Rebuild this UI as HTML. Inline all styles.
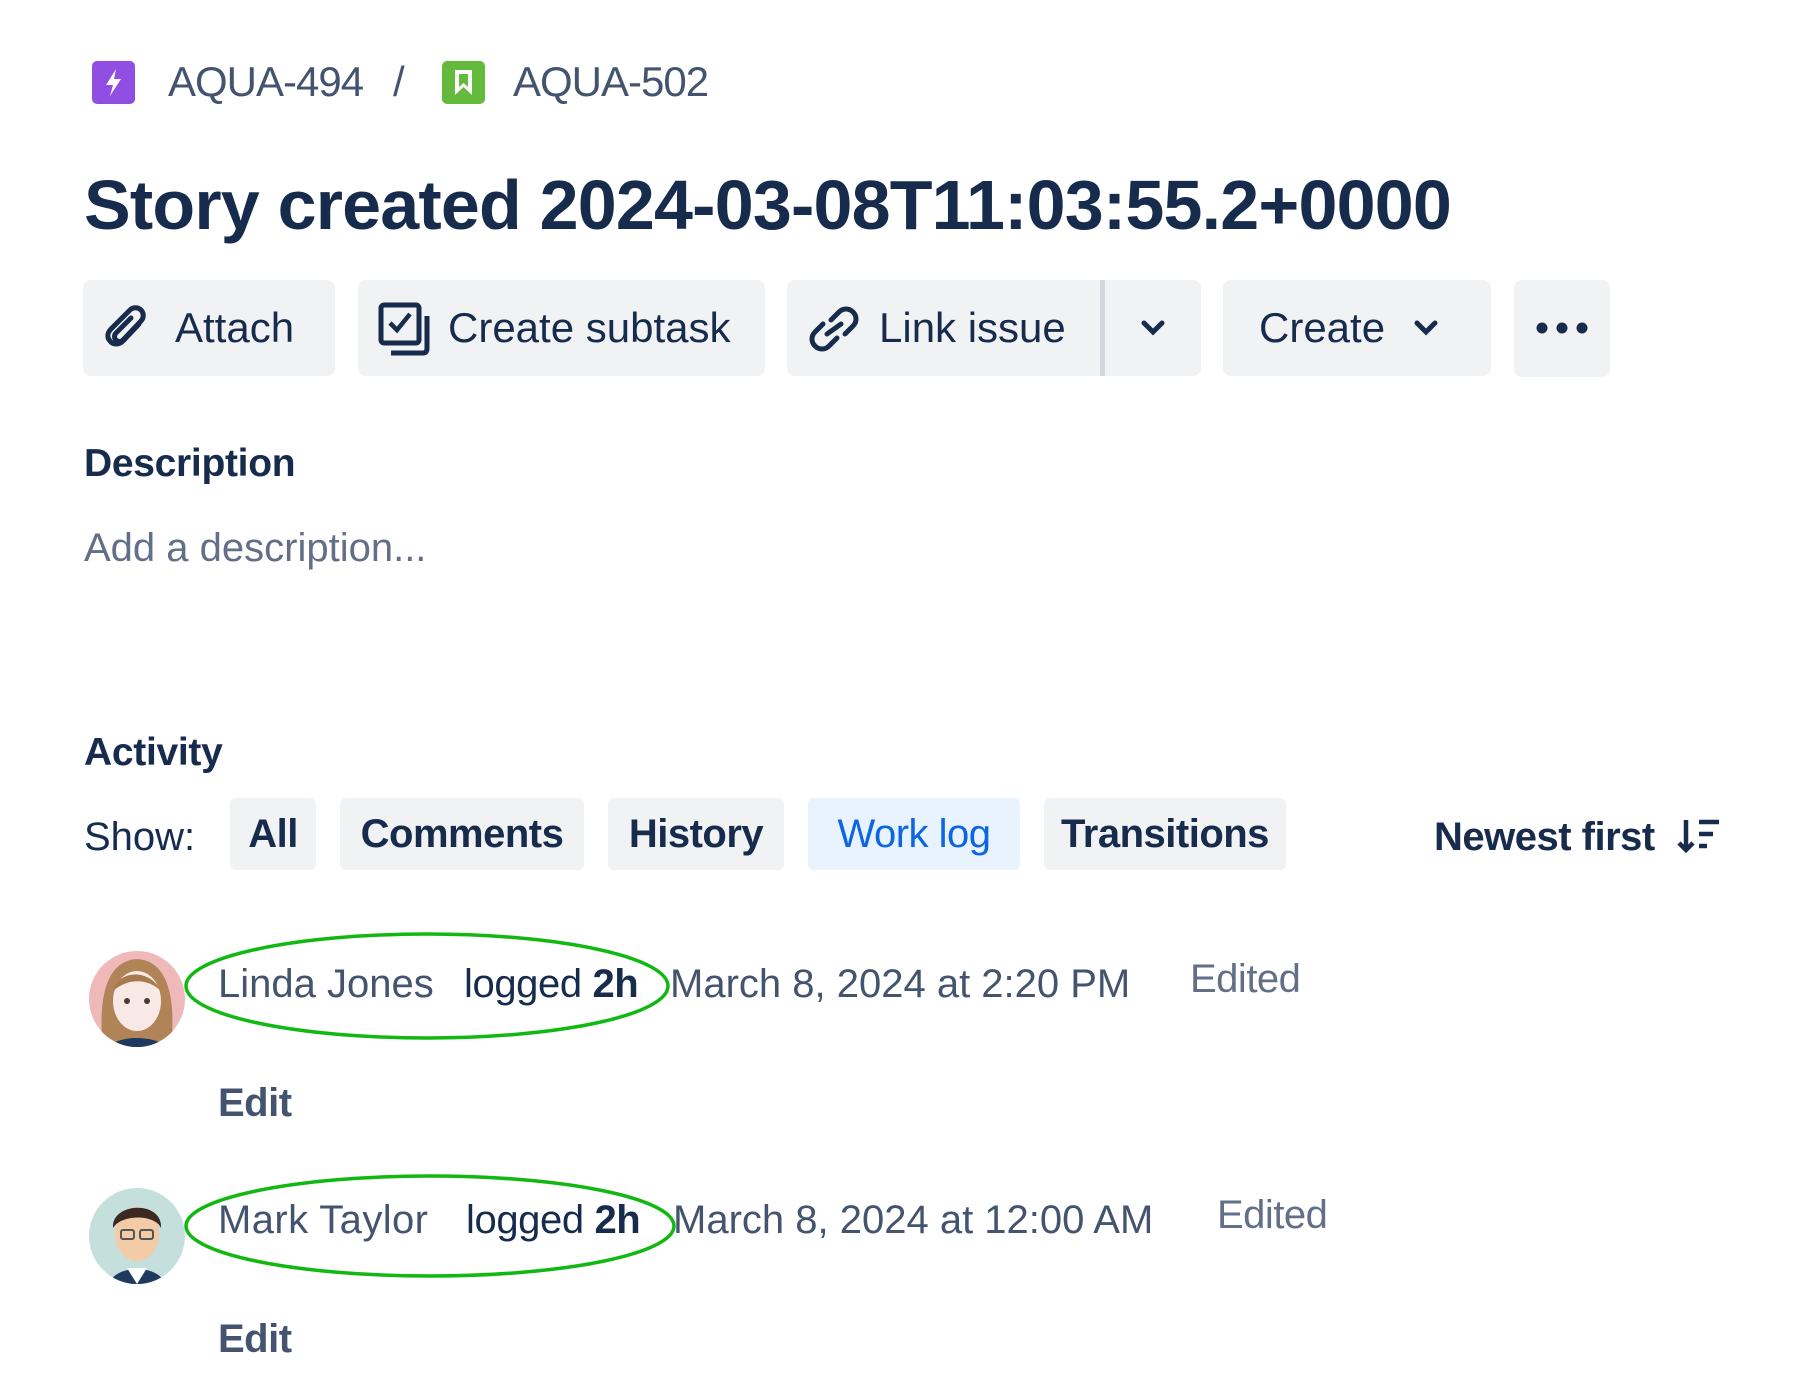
<!DOCTYPE html>
<html><head><meta charset="utf-8"><style>
*{margin:0;padding:0;box-sizing:border-box}
body{width:1800px;height:1380px;background:#fff;position:relative;overflow:hidden;font-family:"Liberation Sans",sans-serif;color:#172b4d}
.a{position:absolute;white-space:nowrap}
.btn{position:absolute;background:#f1f2f4;border-radius:8px;top:280px;height:96px}
.bt{position:absolute;top:0;line-height:96px;font-size:42px;color:#172b4d}
.pill{position:absolute;top:800px;height:72px;background:#f1f2f4;border-radius:6px;font-size:40px;font-weight:bold;line-height:72px;text-align:center;color:#172b4d;letter-spacing:-0.5px}
.t{font-size:40px;line-height:1;color:#44546f}
</style></head><body>

<svg class="a" style="left:92px;top:61px" width="43" height="43" viewBox="0 0 43 43"><rect width="43" height="43" rx="5" fill="#904ee2"/><path d="M24 8 L14 24 H21 L18 35 L29 18 H22 Z" fill="#fff"/></svg>
<div class="a" style="left:168px;top:58px;font-size:42px;color:#44546f;letter-spacing:-1px">AQUA-494</div>
<div class="a" style="left:393px;top:58px;font-size:42px;color:#44546f">/</div>
<svg class="a" style="left:442px;top:61px" width="43" height="43" viewBox="0 0 43 43"><rect width="43" height="43" rx="5" fill="#63ba3c"/><path d="M13 9 H30 V34 L21.5 26 L13 34 Z" fill="#fff"/><path d="M17 13 H26 V26 L21.5 22 L17 26 Z" fill="#63ba3c"/></svg>
<div class="a" style="left:513px;top:58px;font-size:42px;color:#44546f;letter-spacing:-1px">AQUA-502</div>

<div class="a" style="left:84px;top:165px;font-size:70px;font-weight:bold;color:#172b4d;letter-spacing:-0.8px">Story created 2024-03-08T11:03:55.2+0000</div>

<div class="btn" style="left:83px;width:252px">
<svg class="a" style="left:20px;top:24px" width="50" height="50" viewBox="0 0 50 50"><path d="M36 20 L20 37 C16 41 10 41 7 37 C4 34 4 29 8 25 L27 6 C30 3 35 3 38 6 C41 9 41 14 38 17 L20 36 C18 38 15 38 13 36 C11 34 11 31 13 29 L28 14" fill="none" stroke="#172b4d" stroke-width="5" stroke-linecap="round"/></svg>
<div class="bt" style="left:92px">Attach</div></div>
<div class="btn" style="left:358px;width:407px">
<svg class="a" style="left:20px;top:22px" width="54" height="54" viewBox="0 0 54 54"><rect x="3" y="3" width="38" height="38" rx="3" fill="none" stroke="#172b4d" stroke-width="5"/><path d="M12 21 L19 28 L32 12" fill="none" stroke="#172b4d" stroke-width="4.5"/><path d="M49 14 V46 C49 49 48 51 45 51 H13" fill="none" stroke="#172b4d" stroke-width="5"/></svg>
<div class="bt" style="left:90px">Create subtask</div></div>
<div class="btn" style="left:787px;width:414px">
<svg class="a" style="left:20px;top:24px" width="54" height="50" viewBox="0 0 54 50"><path d="M24 16 L32 8 C36 4 42 4 46 8 C50 12 50 18 46 22 L38 30 M30 34 L22 42 C18 46 12 46 8 42 C4 38 4 32 8 28 L16 20 M20 30 L34 20" fill="none" stroke="#172b4d" stroke-width="5" stroke-linecap="round"/></svg>
<div class="bt" style="left:92px">Link issue</div>
<div class="a" style="left:313px;top:0;width:5px;height:96px;background:#d4d7dc"></div>
<svg class="a" style="left:353px;top:38px" width="26" height="20" viewBox="0 0 26 20"><path d="M4 5 L13 14 L22 5" fill="none" stroke="#172b4d" stroke-width="5" stroke-linecap="round"/></svg></div>
<div class="btn" style="left:1223px;width:268px">
<div class="bt" style="left:36px">Create</div>
<svg class="a" style="left:190px;top:38px" width="26" height="20" viewBox="0 0 26 20"><path d="M4 5 L13 14 L22 5" fill="none" stroke="#172b4d" stroke-width="5" stroke-linecap="round"/></svg></div>
<div class="btn" style="left:1514px;width:96px;height:97px">
<svg class="a" style="left:20px;top:38px" width="56" height="20" viewBox="0 0 56 20"><circle cx="8" cy="10" r="5.5" fill="#172b4d"/><circle cx="28" cy="10" r="5.5" fill="#172b4d"/><circle cx="48" cy="10" r="5.5" fill="#172b4d"/></svg></div>

<div class="a" style="left:84px;top:442px;font-size:39px;font-weight:bold;letter-spacing:-0.3px">Description</div>
<div class="a" style="left:84px;top:526px;font-size:40px;color:#626f86;letter-spacing:0px">Add a description...</div>

<div class="a" style="left:84px;top:731px;font-size:39px;font-weight:bold;letter-spacing:-0.3px">Activity</div>
<div class="a" style="left:84px;top:815px;font-size:40px;color:#172b4d">Show:</div>
<div class="pill" style="left:230px;top:798px;width:86px">All</div>
<div class="pill" style="left:340px;top:798px;width:244px">Comments</div>
<div class="pill" style="left:608px;top:798px;width:176px">History</div>
<div class="pill" style="left:808px;top:798px;width:212px;background:#e9f2ff;color:#0c66e4;font-weight:normal">Work log</div>
<div class="pill" style="left:1044px;top:798px;width:242px">Transitions</div>
<div class="a" style="left:1434px;top:815px;font-size:40px;font-weight:bold;letter-spacing:-0.5px">Newest first</div>
<svg class="a" style="left:1677px;top:818px" width="44" height="36" viewBox="0 0 44 36"><path d="M9 2 V32 M2 25 L9 32 L16 25" fill="none" stroke="#172b4d" stroke-width="4.5"/><path d="M22 4 H42 M22 16 H36 M22 28 H30" stroke="#172b4d" stroke-width="4.5"/></svg>

<svg class="a" style="left:89px;top:951px" width="96" height="96" viewBox="0 0 96 96"><defs><clipPath id="c1"><circle cx="48" cy="48" r="48"/></clipPath></defs><g clip-path="url(#c1)"><rect width="96" height="96" fill="#f0b9b9"/><path d="M14 96 C10 60 12 10 48 8 C84 10 86 60 82 96 Z" fill="#b08457"/><ellipse cx="48" cy="50" rx="24" ry="30" fill="#f8e8e6"/><path d="M24 40 C28 20 60 16 72 40 C60 28 40 26 24 40Z" fill="#a87a4e"/><circle cx="38" cy="50" r="3" fill="#4a3a33"/><circle cx="58" cy="50" r="3" fill="#4a3a33"/><path d="M20 96 C28 84 68 84 76 96Z" fill="#1f3a5f"/></g></svg>
<svg class="a" style="left:180px;top:928px" width="500" height="120" viewBox="0 0 500 120"><ellipse cx="247" cy="58" rx="241" ry="52" fill="none" stroke="#12b812" stroke-width="3.5"/></svg>
<div class="a t" style="left:218px;top:964px;letter-spacing:0px">Linda Jones</div>
<div class="a t" style="left:464px;top:964px;color:#172b4d;letter-spacing:-0.4px">logged <b>2h</b></div>
<div class="a t" style="left:670px;top:964px;letter-spacing:0px">March 8, 2024 at 2:20 PM</div>
<div class="a t" style="left:1190px;top:959px;color:#626f86;letter-spacing:-0.5px">Edited</div>
<div class="a t" style="left:218px;top:1083px;font-weight:bold;letter-spacing:-0.5px">Edit</div>

<svg class="a" style="left:89px;top:1188px" width="96" height="96" viewBox="0 0 96 96"><defs><clipPath id="c2"><circle cx="48" cy="48" r="48"/></clipPath></defs><g clip-path="url(#c2)"><rect width="96" height="96" fill="#c5e0dc"/><path d="M20 96 C26 76 70 76 76 96Z" fill="#1f3a5f"/><path d="M38 80 L48 96 L58 80Z" fill="#fff"/><ellipse cx="48" cy="46" rx="22" ry="27" fill="#f3cba6"/><path d="M24 40 C22 14 74 12 72 40 C66 26 32 26 24 40Z" fill="#3b2a22"/><rect x="32" y="42" width="13" height="9" rx="2" fill="none" stroke="#555" stroke-width="2"/><rect x="51" y="42" width="13" height="9" rx="2" fill="none" stroke="#555" stroke-width="2"/></g></svg>
<svg class="a" style="left:180px;top:1168px" width="510" height="120" viewBox="0 0 510 120"><ellipse cx="250" cy="58" rx="244" ry="50" fill="none" stroke="#12b812" stroke-width="3.5"/></svg>
<div class="a t" style="left:218px;top:1200px;letter-spacing:0.4px">Mark Taylor</div>
<div class="a t" style="left:466px;top:1200px;color:#172b4d;letter-spacing:-0.4px">logged <b>2h</b></div>
<div class="a t" style="left:673px;top:1200px;letter-spacing:0px">March 8, 2024 at 12:00 AM</div>
<div class="a t" style="left:1217px;top:1195px;color:#626f86;letter-spacing:-0.5px">Edited</div>
<div class="a t" style="left:218px;top:1319px;font-weight:bold;letter-spacing:-0.5px">Edit</div>

</body></html>
